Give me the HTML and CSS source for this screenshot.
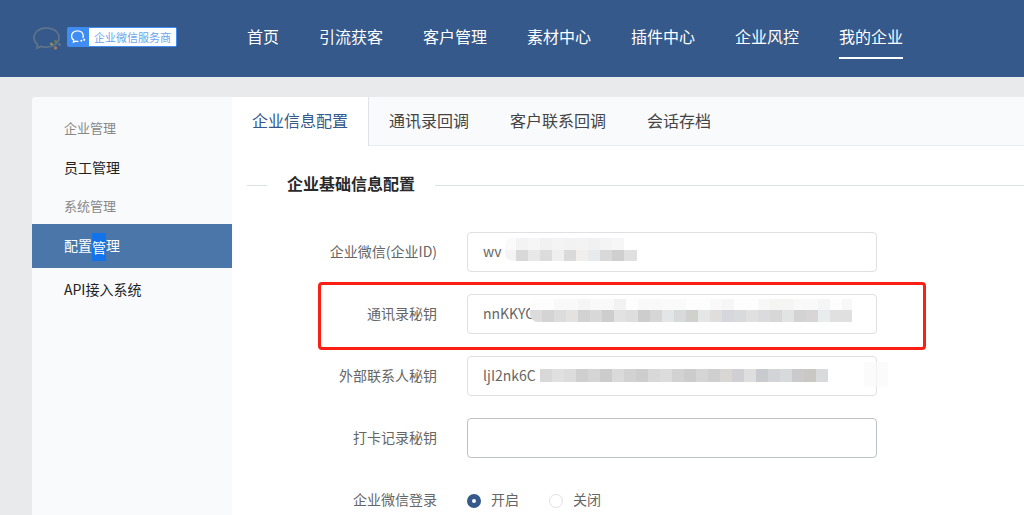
FILE: index.html
```html
<!DOCTYPE html>
<html lang="zh-CN">
<head>
<meta charset="utf-8">
<title>企业信息配置</title>
<link rel="stylesheet" href="styles.css">
</head>
<body>
<header class="topbar">
  <div class="logo">
    <svg class="logo-mark" width="32" height="26" viewBox="0 0 32 26" fill="none">
      <path d="M14.500 1.800C7.500 1.800 2 6 2 11.500C2 14.500 3.500 16.800 5.500 18.500L5 22L9 20.300C11 21 12.500 21.200 14.500 21.200C21 21.200 27 17 27 11.500C27 6 21 1.800 14.500 1.800Z" stroke="#5e7389" stroke-width="1.800"/>
      <circle cx="23.500" cy="15.500" r="1.600" fill="#5f7f5f"/>
      <circle cx="19.500" cy="18" r="1.600" fill="#8d8f62"/>
      <circle cx="23.500" cy="22" r="1.700" fill="#a07c63"/>
      <circle cx="27.500" cy="18.500" r="1.400" fill="#5e7389"/>
    </svg>
    <div class="badge">
      <span class="badge-icon">
        <svg width="22" height="20" viewBox="0 0 22 20" fill="none">
          <path d="M10 3.500C6.500 3.500 3.700 5.800 3.700 9C3.700 11 4.700 12.400 6 13.300L5.700 15.300L8 14.300C9 14.600 10 14.700 11 14.600" stroke="#fff" stroke-width="1.400"/>
          <path d="M10 3.500C13.500 3.500 16 5.800 16 9C16 9.800 15.800 10.600 15.500 11.200" stroke="#fff" stroke-width="1.400"/>
          <circle cx="14" cy="14" r="1.100" fill="#fff"/>
          <circle cx="17" cy="13" r="1.100" fill="#fff"/>
        </svg>
      </span>
      <span class="badge-text">企业微信服务商</span>
    </div>
  </div>
  <nav class="nav">
    <a class="nav-item">首页</a>
    <a class="nav-item">引流获客</a>
    <a class="nav-item">客户管理</a>
    <a class="nav-item">素材中心</a>
    <a class="nav-item">插件中心</a>
    <a class="nav-item">企业风控</a>
    <a class="nav-item is-active">我的企业</a>
  </nav>
</header>

<div class="page">
  <div class="card">
    <aside class="side">
      <div class="side-group first">企业管理</div>
      <a class="side-link short">员工管理</a>
      <div class="side-group">系统管理</div>
      <a class="side-link is-current">配置<span class="picked">管</span>理</a>
      <a class="side-link">API接入系统</a>
    </aside>
    <main class="main">
      <div class="tabs">
        <a class="tab is-active">企业信息配置</a>
        <a class="tab">通讯录回调</a>
        <a class="tab">客户联系回调</a>
        <a class="tab">会话存档</a>
      </div>
      <div class="section-title"><span>企业基础信息配置</span></div>
      <form class="form">
        <div class="row">
          <label class="label">企业微信(企业ID)</label>
          <div class="field">
            <input class="input" value="wv">
            <i class="mosaic mosaic-a"></i>
          </div>
        </div>
        <div class="row">
          <label class="label">通讯录秘钥</label>
          <div class="field">
            <input class="input" value="nnKKYC">
            <i class="mosaic mosaic-b"></i>
          </div>
        </div>
        <div class="row">
          <label class="label">外部联系人秘钥</label>
          <div class="field">
            <input class="input" value="ljI2nk6C">
            <i class="mosaic mosaic-c"></i>
          </div>
        </div>
        <div class="row">
          <label class="label">打卡记录秘钥</label>
          <div class="field">
            <input class="input input-empty" value="">
          </div>
        </div>
        <div class="row">
          <label class="label">企业微信登录</label>
          <div class="radios">
            <span class="radio is-on">开启</span>
            <span class="radio">关闭</span>
          </div>
        </div>
      </form>
      <div class="callout"></div>
    </main>
  </div>
</div>
</body>
</html>
```

FILE: styles.css
```css
*, *::before, *::after { box-sizing: border-box; }
html, body { margin: 0; height: 515px; overflow: hidden; }
body {
  background: #e9eaec;
  font-family: "Noto Sans CJK SC", "Liberation Sans", sans-serif;
  font-size: 14px;
  color: #333;
}
.topbar {
  height: 77px;
  background: #34598a;
  display: flex;
  align-items: flex-start;
  padding-left: 32px;
}
.logo { display: flex; align-items: flex-start; width: 215px; padding-top: 27px; }
.logo-mark { margin-right: 3px; margin-top: -1px; }
.badge {
  width: 110px;
  height: 20px;
  display: flex;
  background: #3f8cf3;
  border-radius: 2px;
  padding: 1px;
}
.badge-icon { width: 21px; height: 18px; display: flex; align-items: center; }
.badge-text {
  flex: 1;
  background: #fff;
  color: #6aa3ee;
  font-size: 11px;
  line-height: 18px;
  padding-left: 5px;
  white-space: nowrap;
}
.nav { display: flex; gap: 40px; }
.nav-item {
  display: block;
  height: 59px;
  line-height: 72px;
  color: #fff;
  font-size: 16px;
  white-space: nowrap;
}
.nav-item.is-active { border-bottom: 2px solid #fff; }

.page { padding: 20px 0 0 32px; }
.card {
  display: flex;
  height: 418px;
  border-radius: 4px 0 0 0;
  overflow: hidden;
  background: #fff;
}
.side { width: 200px; flex: none; background: #f9fafc; padding-top: 11px; }
.side-group {
  height: 36px;
  line-height: 35px;
  padding-left: 32px;
  font-size: 13px;
  color: #888;
}
.side-group.first { height: 40px; line-height: 40px; }
.side-link {
  display: block;
  height: 44px;
  line-height: 42px;
  padding-left: 32px;
  color: #222;
  font-size: 14px;
}
.side-link.short { height: 40px; line-height: 38px; }
.is-current { background: #4b76a9; color: #fff; }
.picked {
  display: inline-block;
  height: 28px;
  line-height: 28px;
  background: #1273eb;
  vertical-align: middle;
  margin-top: -1px;
}

.main { position: relative; flex: 1; min-width: 0; background: #fff; }
.tabs {
  display: flex;
  height: 49px;
  background: #f9fafc;
  border-bottom: 1px solid #e9eaec;
}
.tab {
  padding: 0 20px;
  border-right: 1px solid transparent;
  line-height: 46px;
  font-size: 16px;
  color: #444;
  white-space: nowrap;
}
.tab.is-active {
  height: 49px;
  background: #fff;
  color: #34598a;
  border-right-color: #e0e2e7;
}
.section-title {
  display: flex;
  align-items: center;
  margin: 24px 0 0 15px;
  height: 30px;
  font-size: 16px;
  font-weight: 700;
  color: #2a2a2a;
}
.section-title::before { content: ""; width: 20px; height: 1px; background: #dcdfe6; }
.section-title::after { content: ""; flex: 1; height: 1px; background: #dcdfe6; }
.section-title span { padding: 0 20px 5px; }

.form { display: flex; flex-direction: column; gap: 22px; margin-top: 32px; }
.row { display: flex; height: 40px; align-items: center; }
.label {
  width: 205px;
  padding-bottom: 2px;
  text-align: right;
  color: #666;
  font-size: 14px;
  white-space: nowrap;
  flex: none;
}
.field { position: relative; width: 410px; margin-left: 30px; height: 40px; }
.input {
  display: block;
  width: 100%;
  height: 40px;
  padding: 0 15px 2px;
  background: #fff;
  border: 1px solid #dfe0e6;
  border-radius: 4px;
  outline: none;
  color: #666;
  font: inherit;
}
.input-empty { border-color: #bfc1ca; }
.mosaic { position: absolute; display: block; background-repeat: no-repeat; }
.mosaic-a {
  left: 38px; top: 6px; width: 132px; height: 23px;
  border-radius: 8px 0 0 8px;
  background-color: #fff;
  background-image:
    linear-gradient(90deg, #fafafa 0 11px, #f3f3f3 0 23px, #f6f6f6 0 35px, #f1f1f1 0 47px, #f4f4f4 0 59px, #f2f2f2 0 71px, #f3f3f3 0 83px, #f1f1f1 0 95px, #f4f4f4 0 107px, #f6f6f6 0 119px, #fff 0),
    linear-gradient(90deg, #f4f4f4 0 11px, #d8d8d8 0 23px, #e8e8e8 0 35px, #dcdcdc 0 47px, #efefef 0 59px, #dadada 0 71px, #f0efee 0 83px, #e9eaeb 0 95px, #d9d9d9 0 107px, #cfcfcf 0 119px, #e0e0e0 0 131px);
  background-size: 100% 12px, 100% 11px;
  background-position: 0 0, 0 12px;
}
.mosaic-b {
  left: 63px; top: 5px; width: 322px; height: 23px;
  border-radius: 8px 0 0 8px;
  background-color: #fff;
  background-image:
    linear-gradient(90deg, #fdfdfd 0 24px, #f9f9f9 0 48px, #f5f5f5 0 60px, #f9f9f9 0 84px, #f2f2f2 0 96px, #fdfdfd 0 108px, #f9f9f9 0 132px, #fafafa 0 156px, #fdfdfd 0 180px, #f9f9f9 0 192px, #f6f6f6 0 204px, #fdfdfd 0 228px, #f8f8f8 0 240px, #f5f5f4 0 264px, #f9f9f9 0 288px, #f5f5f5 0 300px, #fdfdfd 0 312px, #f8f8f8 0 322px),
    linear-gradient(90deg, #dcdcdc 0 12px, #d4d4d4 0 24px, #dcdcdc 0 36px, #e4e2e0 0 48px, #d2d2d2 0 60px, #d8d8d8 0 72px, #cdcdcd 0 84px, #e2e2e2 0 96px, #dedede 0 108px, #cdcdcd 0 120px, #d6d6d6 0 132px, #e4e5e6 0 144px, #d8d9da 0 156px, #d0d0cd 0 168px, #e5e6e6 0 180px, #e0dedc 0 192px, #d5d7dc 0 204px, #d9dadb 0 216px, #e0e0e0 0 228px, #dbdbdd 0 240px, #d7d7d7 0 252px, #e2e3e3 0 264px, #d3d3d4 0 276px, #d7d5d5 0 288px, #e9eced 0 300px, #e0e0e0 0 322px);
  background-size: 100% 11px, 100% 12px;
  background-position: 0 0, 0 11px;
}
.mosaic-c {
  left: 73px; top: 13px; width: 288px; height: 13px;
  background-image:
    linear-gradient(90deg, #d8d8d8 0 12px, #e0e0e0 0 24px, #dcdcdc 0 36px, #cfcfcf 0 48px, #d5d5d5 0 60px, #ccc 0 72px, #dadada 0 84px, #d2d2d2 0 96px, #cdcdcd 0 108px, #d8d8d8 0 120px, #dcdcdc 0 132px, #d2d2d2 0 144px, #cccccc 0 156px, #d5d5d5 0 168px, #cfcfcf 0 180px, #d8d7d3 0 192px, #d0d0d4 0 204px, #dedede 0 216px, #c8cacd 0 228px, #d3d4d7 0 240px, #d8d9da 0 252px, #cacacc 0 264px, #c9c8c5 0 276px, #d9dadb 0 288px);
}
.mosaic-c::after {
  content: "";
  position: absolute;
  left: 324px;
  top: -7px;
  width: 24px;
  height: 25px;
  background: rgba(250, 250, 250, 0.7);
}
.radios { display: flex; margin-left: 30px; gap: 30px; color: #666; }
.radio { display: flex; align-items: center; gap: 10px; white-space: nowrap; line-height: 18px; padding-bottom: 2px; }
.radio::before {
  content: "";
  width: 14px;
  height: 14px;
  border-radius: 50%;
  border: 1px solid #dfe0e6;
  background: #fff;
  margin-top: 3px;
}
.radio.is-on::before { border: 5px solid #34598a; }
.callout {
  position: absolute;
  left: 86px;
  top: 185px;
  width: 608px;
  height: 68px;
  border: 3px solid #fb1e12;
  border-radius: 4px;
  pointer-events: none;
}
```
